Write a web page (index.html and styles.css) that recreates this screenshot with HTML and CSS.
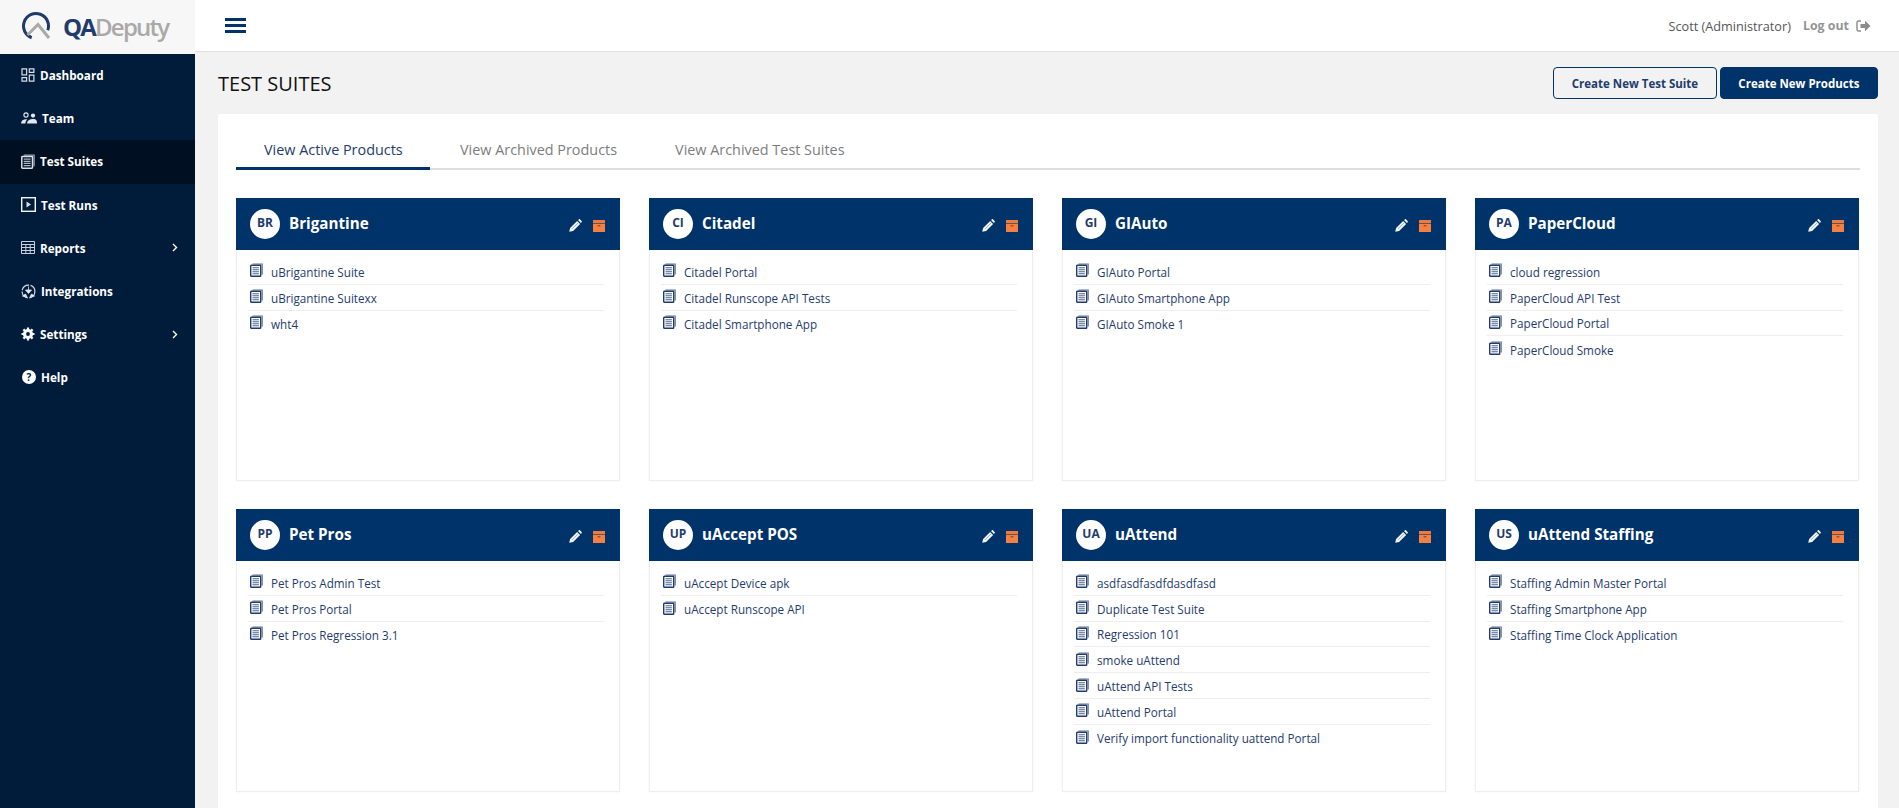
FILE: index.html
```html
<!DOCTYPE html>
<html lang="en">
<head>
    <meta charset="UTF-8">
    <meta name="viewport" content="width=device-width, initial-scale=1.0">
    <title>QADeputy - Test Suites</title>
    <link rel="stylesheet" href="styles.css">
</head>
<body>
    <svg class="sprites" width="0" height="0">
        <symbol id="doc" viewBox="0 0 13 14">
            <path d="M2.500 1h9.700v10.500" fill="none" stroke="currentColor" stroke-width="1.200" opacity=".7"/>
            <rect x=".7" y="2.300" width="10" height="11" rx=".6" fill="none" stroke="currentColor" stroke-width="1.400"/>
            <path d="M2.500 4.800h6.400M2.500 6.800h6.400M2.500 8.800h6.400M2.500 10.800h6.400" stroke="currentColor" stroke-width="1.100" opacity=".8"/>
        </symbol>
        <symbol id="pencil" viewBox="0 0 13 13">
            <path d="M.2 12.800l.9-3.900 7-7 3 3-7 7z" fill="#f2f5f8"/>
            <path d="M9 1.100l.8-.7c.4-.4.9-.4 1.300 0l1.500 1.500c.4.400.4.900 0 1.300l-.7.800z" fill="#f2f5f8"/>
            <path d="M3 9.900l5.800-5.800" stroke="#8fa5bd" stroke-width=".9"/>
        </symbol>
        <symbol id="archive" viewBox="0 0 12 12">
            <path d="M0 0h12v3H0z" fill="#ee7a3c"/>
            <path d="M0 3.600h12V12H0z" fill="#f6803f"/>
            <path d="M4.600 5.200h2.800v1.200H4.600z" fill="#7a4a35"/>
        </symbol>
    </svg>

    <aside class="sidebar">
        <div class="logo">
            <svg class="logo-mark" viewBox="0 0 30 30" width="30" height="30">
                <path d="M25.750 19.300A12.500 12.500 0 1 0 9.700 26.750" fill="none" stroke="#1f3c6d" stroke-width="3"/>
                <path d="M5.500 24L16 13.500 27 27" fill="none" stroke="#a9a9a9" stroke-width="3"/>
            </svg>
            <span class="logo-text"><b>QA</b>Deputy</span>
        </div>
        <nav class="nav">
            <a class="nav-item">
                <svg viewBox="0 0 14 14" width="14" height="14"><path d="M1 .8h4.600v6H1zM8.300.8h4.600v3.600H8.300zM1 9.600h4.600v3.600H1zM8.300 7.200h4.600v6H8.300z" fill="none" stroke="#d8dee6" stroke-width="1.200"/></svg>
                <span>Dashboard</span>
            </a>
            <a class="nav-item">
                <svg viewBox="0 0 16 12" width="16" height="12"><circle cx="5" cy="3" r="2.100" fill="none" stroke="#e4e8ee" stroke-width="1.100"/><circle cx="12" cy="3.600" r="2.100" fill="#e4e8ee"/><path d="M0 11.500c.2-2.800 2-4.300 5.400-4.300l1 .2c-1.400 1-2 2.400-2 4.100zM6 11.500c.2-3 2.400-4.600 6-4.600s4 1.800 4 4.600z" fill="#e4e8ee"/></svg>
                <span>Team</span>
            </a>
            <a class="nav-item active">
                <svg class="nav-doc" width="14" height="15"><use href="#doc"/></svg>
                <span>Test Suites</span>
            </a>
            <a class="nav-item">
                <svg viewBox="0 0 15 15" width="15" height="15"><rect x=".7" y=".7" width="13.600" height="13.600" fill="none" stroke="#f4f6f8" stroke-width="1.400"/><path d="M5.500 4.500l4.500 3-4.500 3z" fill="#d8dee6"/></svg>
                <span>Test Runs</span>
            </a>
            <a class="nav-item">
                <svg viewBox="0 0 14 13" width="14" height="13"><path d="M.5.500h13v12H.5zM.5 3.500h13M.5 6.500h13M.5 9.500h13M4.800 3.500v9M9.200 3.500v9" fill="none" stroke="#c9d0d9"/></svg>
                <span>Reports</span>
                <svg class="chevron" viewBox="0 0 6 9" width="6" height="9"><path d="M1 1l3.500 3.500L1 8" fill="none" stroke="#fff" stroke-width="1.400"/></svg>
            </a>
            <a class="nav-item">
                <svg viewBox="0 0 15 15" width="15" height="15"><circle cx="7.500" cy="7.500" r="6.400" fill="none" stroke="#d8dee6" stroke-width="1.200" stroke-dasharray="9 1.500"/><path d="M7.500 2.500v5M4.500 6h6L7.500 9.500zM1.500 12l3-2 1.500 3zM13.500 12l-3-2-1.500 3z" fill="#e4e8ee" stroke="#e4e8ee" stroke-width=".8"/></svg>
                <span>Integrations</span>
            </a>
            <a class="nav-item">
                <svg viewBox="0 0 14 14" width="14" height="14"><circle cx="7" cy="7" r="3.600" fill="none" stroke="#f4f6f8" stroke-width="3"/><path d="M7 .5v13M.5 7h13M2.400 2.400l9.200 9.200M11.600 2.400l-9.200 9.200" stroke="#f4f6f8" stroke-width="2.200"/><circle cx="7" cy="7" r="1.900" fill="#001c3a"/></svg>
                <span>Settings</span>
                <svg class="chevron" viewBox="0 0 6 9" width="6" height="9"><path d="M1 1l3.500 3.500L1 8" fill="none" stroke="#fff" stroke-width="1.400"/></svg>
            </a>
            <a class="nav-item">
                <span class="help-icon">?</span>
                <span>Help</span>
            </a>
        </nav>
    </aside>

    <div class="main">
        <header class="topbar">
            <div class="burger"><i></i><i></i><i></i></div>
            <div class="user">
                <span class="user-name">Scott (Administrator)</span>
                <span class="logout">Log out</span>
                <svg viewBox="0 0 15 12" width="15" height="12"><path d="M5 1H2.500A1.500 1.500 0 0 0 1 2.500v7A1.500 1.500 0 0 0 2.500 11H5" fill="none" stroke="#8c8c8c" stroke-width="1.400"/><path d="M4.500 4h4.500V.8L14.500 6 9 11.200V8H4.500z" fill="#8c8c8c"/></svg>
            </div>
        </header>

        <section class="page-head">
            <h1>TEST SUITES</h1>
            <div class="actions">
                <button class="btn btn-outline">Create New Test Suite</button>
                <button class="btn btn-solid">Create New Products</button>
            </div>
        </section>

        <section class="panel">
            <div class="tabs">
                <a class="tab active">View Active Products</a>
                <a class="tab">View Archived Products</a>
                <a class="tab">View Archived Test Suites</a>
            </div>

            <div class="cards">
                <div class="card">
                    <div class="card-head">
                        <span class="badge">BR</span>
                        <h2>Brigantine</h2>
                        <svg class="edit" width="13" height="13"><use href="#pencil"/></svg>
                        <svg width="12" height="12"><use href="#archive"/></svg>
                    </div>
                    <ul class="suites">
                        <li><svg width="13" height="14"><use href="#doc"/></svg>uBrigantine Suite</li>
                        <li><svg width="13" height="14"><use href="#doc"/></svg>uBrigantine Suitexx</li>
                        <li><svg width="13" height="14"><use href="#doc"/></svg>wht4</li>
                    </ul>
                </div>

                <div class="card">
                    <div class="card-head">
                        <span class="badge">CI</span>
                        <h2>Citadel</h2>
                        <svg class="edit" width="13" height="13"><use href="#pencil"/></svg>
                        <svg width="12" height="12"><use href="#archive"/></svg>
                    </div>
                    <ul class="suites">
                        <li><svg width="13" height="14"><use href="#doc"/></svg>Citadel Portal</li>
                        <li><svg width="13" height="14"><use href="#doc"/></svg>Citadel Runscope API Tests</li>
                        <li><svg width="13" height="14"><use href="#doc"/></svg>Citadel Smartphone App</li>
                    </ul>
                </div>

                <div class="card">
                    <div class="card-head">
                        <span class="badge">GI</span>
                        <h2>GIAuto</h2>
                        <svg class="edit" width="13" height="13"><use href="#pencil"/></svg>
                        <svg width="12" height="12"><use href="#archive"/></svg>
                    </div>
                    <ul class="suites">
                        <li><svg width="13" height="14"><use href="#doc"/></svg>GIAuto Portal</li>
                        <li><svg width="13" height="14"><use href="#doc"/></svg>GIAuto Smartphone App</li>
                        <li><svg width="13" height="14"><use href="#doc"/></svg>GIAuto Smoke 1</li>
                    </ul>
                </div>

                <div class="card">
                    <div class="card-head">
                        <span class="badge">PA</span>
                        <h2>PaperCloud</h2>
                        <svg class="edit" width="13" height="13"><use href="#pencil"/></svg>
                        <svg width="12" height="12"><use href="#archive"/></svg>
                    </div>
                    <ul class="suites">
                        <li><svg width="13" height="14"><use href="#doc"/></svg>cloud regression</li>
                        <li><svg width="13" height="14"><use href="#doc"/></svg>PaperCloud API Test</li>
                        <li><svg width="13" height="14"><use href="#doc"/></svg>PaperCloud Portal</li>
                        <li><svg width="13" height="14"><use href="#doc"/></svg>PaperCloud Smoke</li>
                    </ul>
                </div>

                <div class="card">
                    <div class="card-head">
                        <span class="badge">PP</span>
                        <h2>Pet Pros</h2>
                        <svg class="edit" width="13" height="13"><use href="#pencil"/></svg>
                        <svg width="12" height="12"><use href="#archive"/></svg>
                    </div>
                    <ul class="suites">
                        <li><svg width="13" height="14"><use href="#doc"/></svg>Pet Pros Admin Test</li>
                        <li><svg width="13" height="14"><use href="#doc"/></svg>Pet Pros Portal</li>
                        <li><svg width="13" height="14"><use href="#doc"/></svg>Pet Pros Regression 3.1</li>
                    </ul>
                </div>

                <div class="card">
                    <div class="card-head">
                        <span class="badge">UP</span>
                        <h2>uAccept POS</h2>
                        <svg class="edit" width="13" height="13"><use href="#pencil"/></svg>
                        <svg width="12" height="12"><use href="#archive"/></svg>
                    </div>
                    <ul class="suites">
                        <li><svg width="13" height="14"><use href="#doc"/></svg>uAccept Device apk</li>
                        <li><svg width="13" height="14"><use href="#doc"/></svg>uAccept Runscope API</li>
                    </ul>
                </div>

                <div class="card">
                    <div class="card-head">
                        <span class="badge">UA</span>
                        <h2>uAttend</h2>
                        <svg class="edit" width="13" height="13"><use href="#pencil"/></svg>
                        <svg width="12" height="12"><use href="#archive"/></svg>
                    </div>
                    <ul class="suites">
                        <li><svg width="13" height="14"><use href="#doc"/></svg>asdfasdfasdfdasdfasd</li>
                        <li><svg width="13" height="14"><use href="#doc"/></svg>Duplicate Test Suite</li>
                        <li><svg width="13" height="14"><use href="#doc"/></svg>Regression 101</li>
                        <li><svg width="13" height="14"><use href="#doc"/></svg>smoke uAttend</li>
                        <li><svg width="13" height="14"><use href="#doc"/></svg>uAttend API Tests</li>
                        <li><svg width="13" height="14"><use href="#doc"/></svg>uAttend Portal</li>
                        <li><svg width="13" height="14"><use href="#doc"/></svg>Verify import functionality uattend Portal</li>
                    </ul>
                </div>

                <div class="card">
                    <div class="card-head">
                        <span class="badge">US</span>
                        <h2>uAttend Staffing</h2>
                        <svg class="edit" width="13" height="13"><use href="#pencil"/></svg>
                        <svg width="12" height="12"><use href="#archive"/></svg>
                    </div>
                    <ul class="suites">
                        <li><svg width="13" height="14"><use href="#doc"/></svg>Staffing Admin Master Portal</li>
                        <li><svg width="13" height="14"><use href="#doc"/></svg>Staffing Smartphone App</li>
                        <li><svg width="13" height="14"><use href="#doc"/></svg>Staffing Time Clock Application</li>
                    </ul>
                </div>
            </div>
        </section>
    </div>
</body>
</html>
```

FILE: styles.css
```css
* {
    box-sizing: border-box;
}

html, body {
    height: 100%;
}

body {
    font-family: "Open Sans", sans-serif;
    background-color: #f2f2f2;
    display: flex;
    margin: 0;
    overflow: hidden;
    color: #1f3c6d;
}

.sprites {
    display: none;
}

.sidebar {
    width: 195px;
    flex-shrink: 0;
    background-color: #001c3a;
}

.logo {
    height: 54px;
    background-color: #f7f7f7;
    display: flex;
    align-items: center;
    padding: 0 0 2px 22px;
    gap: 11px;
}

.logo-text {
    font-size: 24px;
    font-weight: 600;
    letter-spacing: -1.800px;
    color: #a9a9a9;
}

.logo-text b {
    font-weight: 700;
    color: #1f3c6d;
}

.nav-item {
    height: 43.200px;
    display: flex;
    align-items: center;
    padding: 0 17px 1px 21px;
    gap: 5px;
    color: #fff;
    font-size: 11.700px;
    font-weight: 700;
}

.nav-item > svg:first-child,
.help-icon {
    flex-shrink: 0;
}

.nav-item.active {
    background-color: #000f22;
}

.nav-doc {
    color: #d8dee6;
}

.chevron {
    margin-left: auto;
}

.help-icon {
    width: 14px;
    height: 14px;
    margin-left: 1px;
    border-radius: 50%;
    background-color: #fff;
    color: #001c3a;
    font-size: 10px;
    line-height: 14px;
    text-align: center;
}

.main {
    flex: 1;
    min-width: 0;
    padding-right: 21px;
}

.topbar {
    height: 52px;
    margin-right: -21px;
    padding: 0 28px 0 30px;
    background-color: #fff;
    border-bottom: 1px solid #e2e2e2;
    display: flex;
    align-items: center;
    justify-content: space-between;
}

.burger {
    width: 21px;
    display: flex;
    flex-direction: column;
    gap: 3px;
}

.burger i {
    height: 3px;
    background-color: #003369;
}

.user {
    display: flex;
    align-items: center;
    font-size: 12.700px;
    color: #555;
}

.logout {
    margin: 0 7px 0 12px;
    font-size: 12.400px;
    font-weight: 700;
    color: #949494;
}

.page-head {
    height: 62px;
    padding-left: 23px;
    display: flex;
    align-items: center;
    justify-content: space-between;
}

.page-head h1 {
    margin: 0;
    font-size: 20px;
    font-weight: 400;
    color: #111;
}

.actions {
    display: flex;
    gap: 3px;
}

.btn {
    height: 32px;
    padding: 0 17.600px;
    border-radius: 4px;
    font-family: "Open Sans", sans-serif;
    font-size: 11.500px;
    font-weight: 700;
}

.btn-outline {
    border: 1px solid #003369;
    background-color: #f2f2f2;
    color: #1f3c6d;
}

.btn-solid {
    border: 1px solid #003369;
    background-color: #003369;
    color: #fff;
}

.panel {
    margin-left: 23px;
    height: 700px;
    padding: 12px 18px 0;
    background-color: #fff;
}

.tabs {
    display: flex;
    border-bottom: 2px solid #dedede;
    height: 44px;
}

.tab {
    height: 44px;
    padding: 14px 30px 0 28px;
    font-size: 14.400px;
    color: #7d7d7d;
    white-space: nowrap;
}

.tab.active {
    width: 194px;
    margin-right: 2px;
    color: #1f3c6d;
    border-bottom: 3px solid #003369;
}

.cards {
    margin-top: 28px;
    display: grid;
    grid-template-columns: repeat(4, 384px);
    grid-auto-rows: 283px;
    column-gap: 29px;
    row-gap: 28px;
}

.card {
    border: 1px solid #eee;
    border-top: none;
    box-shadow: 0 0 2px rgba(0, 0, 0, 0.06);
}

.card-head {
    height: 52px;
    margin: 0 -1px;
    padding: 0 15px 0 14px;
    background-color: #003369;
    display: flex;
    align-items: center;
    gap: 7px;
}

.card-head svg {
    flex-shrink: 0;
    margin-top: 3px;
}

.badge {
    width: 30px;
    height: 30px;
    border-radius: 50%;
    background-color: #fff;
    color: #1f3c6d;
    font-size: 12px;
    font-weight: 700;
    line-height: 28px;
    text-align: center;
    flex-shrink: 0;
}

.card-head h2 {
    flex: 1;
    margin: 0 0 2px 2px;
    color: #fff;
    font-size: 15.200px;
    font-weight: 700;
}

.edit {
    margin-right: 4px;
}

.suites {
    list-style: none;
    margin: 9px 0 0;
    padding: 0 15px 0 11px;
}

.suites li {
    height: 25.800px;
    padding: 1px 0 0 2px;
    display: flex;
    align-items: center;
    gap: 8px;
    border-bottom: 1px solid #eee;
    font-size: 11.700px;
    color: #1f3c6d;
}

.suites li:last-child {
    border-bottom: none;
}

.suites svg {
    margin-bottom: 3px;
    flex-shrink: 0;
}
```
